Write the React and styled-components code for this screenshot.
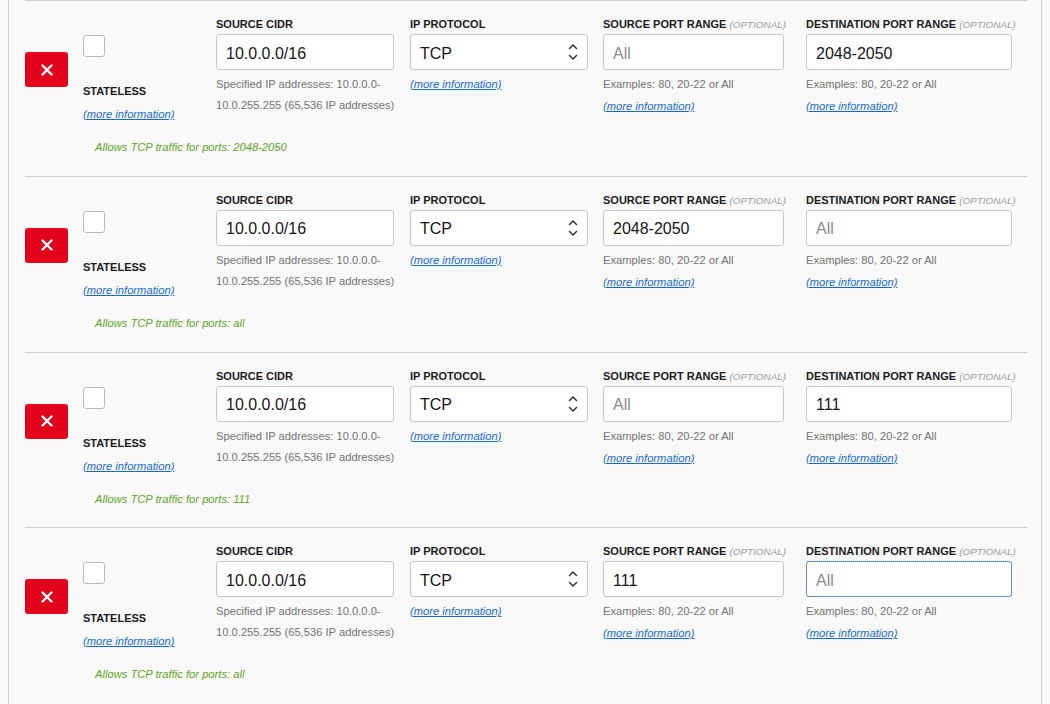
import React from 'react';
import styled, { createGlobalStyle } from 'styled-components';

const GlobalStyle = createGlobalStyle`
    html, body {
        margin: 0;
        padding: 0;
        background: #f9f9f9;
        font-family: "Liberation Sans", Arial, sans-serif;
        color: #1c1c1c;
    }
`;

const Panel = styled.div`
    margin: 0 8px;
    min-height: 704px;
    padding: 0 14px 0 16px;
    border-left: 1px solid #cdd0d4;
    border-right: 1px solid #cdd0d4;
    background: #f9f9f9;
`;

const Rule = styled.div`
    border-top: 1px solid #c9ccd1;
    padding: 17px 0 21.75px;
`;

const Top = styled.div`
    display: flex;
    align-items: flex-start;
`;

const DeleteButton = styled.button`
    width: 43px;
    height: 35px;
    margin: 34px 15px 0 0;
    padding: 0;
    border: none;
    border-radius: 3px;
    background: #e2001a;
    display: flex;
    align-items: center;
    justify-content: center;
    flex-shrink: 0;
    cursor: pointer;
`;

const StatelessCol = styled.div`
    width: 133px;
    flex-shrink: 0;
    padding-top: 17px;
`;

const Checkbox = styled.div`
    width: 20px;
    height: 20px;
    border: 1px solid #b9b9b9;
    border-radius: 3px;
    background: #fff;
`;

const Label = styled.div`
    font-size: 11px;
    line-height: 13px;
    font-weight: 700;
    color: #1c1c1c;
    white-space: nowrap;
    margin-top: ${p => p.$mt || 0}px;

    em {
        font-size: 9.9px;
        font-weight: 400;
        color: #9b9b9b;
        font-style: italic;
    }
`;

const Link = styled.a`
    display: block;
    width: max-content;
    font-size: 11.2px;
    line-height: 21px;
    font-style: italic;
    color: #1769d6;
    text-decoration: underline;
    margin-top: ${p => p.$mt || 0}px;
    cursor: pointer;
`;

const Field = styled.div`
    width: ${p => p.$w}px;
    margin-right: ${p => p.$mr || 0}px;
    flex-shrink: 0;
`;

const Input = styled.div`
    box-sizing: border-box;
    height: 36px;
    margin-top: 3px;
    padding: 3px 9px 0;
    display: flex;
    align-items: center;
    justify-content: space-between;
    background: #fff;
    border: 1px solid ${p => (p.$focused ? '#8db4e6' : '#c6c6c6')};
    outline: ${p => (p.$focused ? '1px dotted #2f74d0' : 'none')};
    outline-offset: -1px;
    border-radius: 3px;
    font-size: 16px;
    color: ${p => (p.$placeholder ? '#8a8a8a' : '#161616')};

    svg {
        margin-top: -3px;
    }
`;

const Help = styled.div`
    margin-top: 4px;
    font-size: 11.2px;
    line-height: 21px;
    color: #747474;
    white-space: nowrap;
`;

const Note = styled.div`
    margin: 15px 0 0 70px;
    font-size: 11.2px;
    line-height: 14px;
    font-style: italic;
    color: #5ea51f;
`;

const CloseIcon = () => (
    <svg width="12" height="12" viewBox="0 0 12 12">
        <path d="M1.5 1.5 L10.5 10.5 M10.5 1.5 L1.5 10.5" stroke="#fff" strokeWidth="2.4" strokeLinecap="round" />
    </svg>
);

const Chevrons = () => (
    <svg width="10" height="18" viewBox="0 0 10 18">
        <path d="M1.5 5.5 L5 2 L8.5 5.5 M1.5 12.5 L5 16 L8.5 12.5" fill="none" stroke="#333" strokeWidth="1.5" strokeLinecap="round" strokeLinejoin="round" />
    </svg>
);

const rules = [
    { source: '', dest: '2048-2050', ports: '2048-2050' },
    { source: '2048-2050', dest: '', ports: 'all' },
    { source: '', dest: '111', ports: '111' },
    { source: '111', dest: '', ports: 'all', focusDest: true },
];

const PortValue = ({ value, focused }) => (
    <Input $placeholder={!value} $focused={focused}>
        {value || 'All'}
    </Input>
);

const RuleRow = ({ rule }) => (
    <Rule>
        <Top>
            <DeleteButton aria-label="remove rule">
                <CloseIcon />
            </DeleteButton>
            <StatelessCol>
                <Checkbox />
                <Label $mt={28}>STATELESS</Label>
                <Link $mt={6}>(more information)</Link>
            </StatelessCol>

            <Field $w={178} $mr={16}>
                <Label>SOURCE CIDR</Label>
                <Input>10.0.0.0/16</Input>
                <Help>
                    Specified IP addresses: 10.0.0.0-
                    <br />
                    10.0.255.255 (65,536 IP addresses)
                </Help>
            </Field>

            <Field $w={178} $mr={15}>
                <Label>IP PROTOCOL</Label>
                <Input>
                    TCP
                    <Chevrons />
                </Input>
                <Link $mt={4}>(more information)</Link>
            </Field>

            <Field $w={181} $mr={22}>
                <Label>SOURCE PORT RANGE <em>(OPTIONAL)</em></Label>
                <PortValue value={rule.source} />
                <Help>Examples: 80, 20-22 or All</Help>
                <Link $mt={1}>(more information)</Link>
            </Field>

            <Field $w={206}>
                <Label>DESTINATION PORT RANGE <em>(OPTIONAL)</em></Label>
                <PortValue value={rule.dest} focused={rule.focusDest} />
                <Help>Examples: 80, 20-22 or All</Help>
                <Link $mt={1}>(more information)</Link>
            </Field>
        </Top>
        <Note>Allows TCP traffic for ports: {rule.ports}</Note>
    </Rule>
);

const App = () => (
    <>
        <GlobalStyle />
        <Panel>
            {rules.map((rule, i) => (
                <RuleRow key={i} rule={rule} />
            ))}
        </Panel>
    </>
);

export default App;
